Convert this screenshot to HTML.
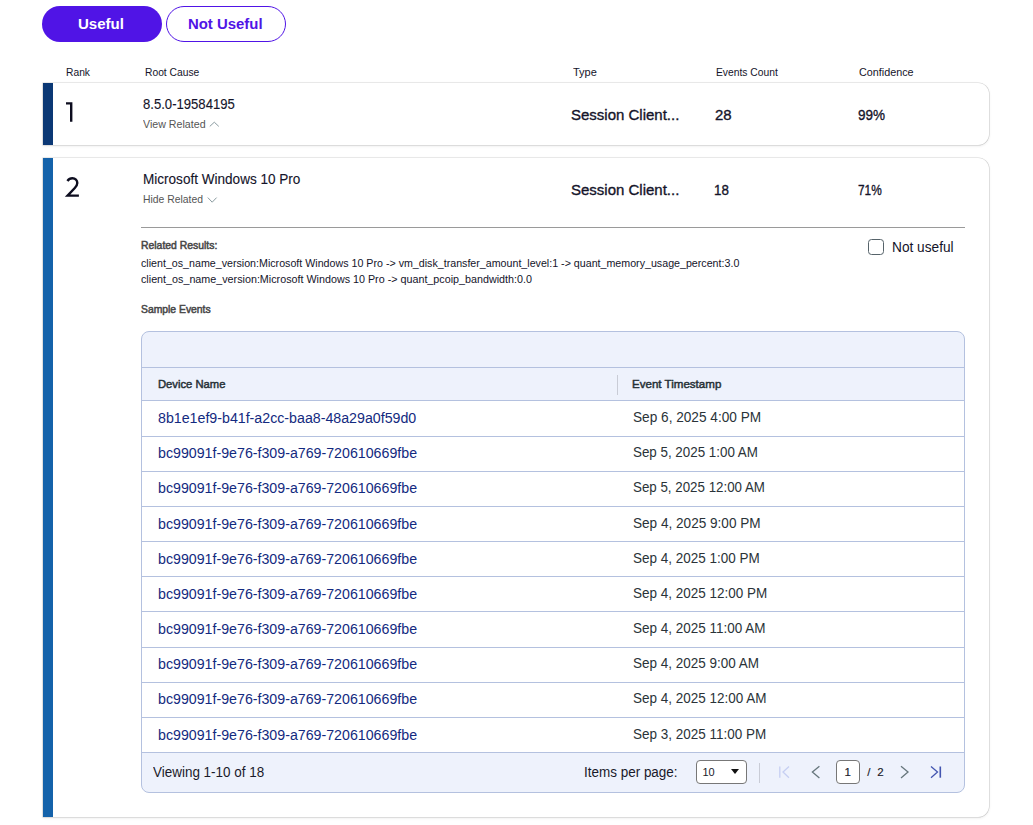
<!DOCTYPE html>
<html><head><meta charset="utf-8">
<style>
*{box-sizing:border-box;margin:0;padding:0}
html,body{width:1033px;height:825px;overflow:hidden;background:#fff;font-family:"Liberation Sans",sans-serif;color:#111}
.t{position:absolute;white-space:nowrap;line-height:1;transform-origin:0 0}
.bm{display:inline-block;width:0;height:0;vertical-align:baseline}
.a{position:absolute}
.xbtn{font-size:14.5px;font-weight:bold;color:#fff;}
.xbtn2{font-size:14.5px;font-weight:bold;color:#5014e6;}
.xhdr{font-size:10.2px;font-weight:normal;color:#14142a;}
.xrank{font-size:28px;font-weight:normal;color:#111;}
.xtitle{font-size:14px;font-weight:normal;color:#14142a;-webkit-text-stroke:0.12px #14142a;}
.xsub{font-size:11px;font-weight:normal;color:#555;}
.xval{font-size:15.5px;font-weight:normal;color:#14142a;-webkit-text-stroke:0.35px #14142a;}
.xrlbl{font-size:10.5px;font-weight:normal;color:#474747;-webkit-text-stroke:0.5px #474747;}
.xrel{font-size:10px;font-weight:normal;color:#14142a;}
.xnu{font-size:14px;font-weight:normal;color:#14142a;}
.xth{font-size:11px;font-weight:normal;color:#263036;-webkit-text-stroke:0.45px #263036;}
.xlink{font-size:14px;font-weight:normal;color:#132a80;}
.xtd{font-size:14px;font-weight:normal;color:#2a3338;}
.xfoot{font-size:14px;font-weight:normal;color:#1a1a2a;}
.xpg{font-size:11.5px;font-weight:normal;color:#1a1a2a;-webkit-text-stroke:0.15px #1a1a2a;}
.xsel{font-size:11px;font-weight:normal;color:#1a1a2a;}
.btn{position:absolute;top:6px;height:36px;width:120px;border-radius:18px}
.b1{left:42px;background:#5014e6}
.b2{left:166px;background:#fff;border:1px solid #5014e6}
.card{position:absolute;left:43px;width:946px;background:#fff;border-left:10px solid #0b3875;border-radius:0 11px 11px 0;box-shadow:0 0 0.5px 0.6px rgba(0,0,0,.16),0 1px 3px rgba(0,0,0,.10)}
.c1{top:83px;height:62px}
.c2{top:158px;height:659px;border-left-color:#1462aa}
.tbl{position:absolute;left:141px;top:331px;width:824px;height:462px;border:1px solid #b4c1df;border-radius:8px;background:#eef2fc;overflow:hidden}
.rows{position:absolute;left:0;top:69px;width:822px;height:352px;background:#fff}
.hl{position:absolute;left:0;width:822px;height:1px;background:#b4c1df}
.cb{position:absolute;left:868px;top:239px;width:16px;height:16px;border:1.4px solid #56636a;border-radius:3.5px;background:#fff}
.box{position:absolute;background:#fff;border:1px solid #777;border-radius:4px}
</style></head><body>
<div class="btn b1"></div>
<div class="btn b2"></div>
<div class="card c1"></div>
<div class="card c2"></div>
<svg class="a" style="left:0;top:0" width="300" height="220" viewBox="0 0 300 220">
<path d="M209.8 126.4 L214.3 122.2 L218.8 126.4" fill="none" stroke="#8a9ba0" stroke-width="1"/>
<path d="M207.8 197.6 L212.2 202.2 L216.6 197.6" fill="none" stroke="#8a9ba0" stroke-width="1"/>
<path d="M66 103.4 H71.2 M71.2 102.2 V121.8" fill="none" stroke="#0d0d1f" stroke-width="2.4"/>
<path d="M67.4 181 C68.8 179 70.5 178.3 72.4 178.3 C75.3 178.3 77.3 180.3 77.3 183 C77.3 185 76.3 186.4 74.8 188 L67.6 195.6 H78.9" fill="none" stroke="#0d0d1f" stroke-width="2.4" stroke-linecap="butt" stroke-linejoin="miter"/>
</svg>
<div class="a" style="left:141px;top:227px;width:824px;height:1px;background:#9a9a9a"></div>
<div class="cb"></div>
<div class="tbl">
  <div class="hl" style="top:35px"></div>
  <div class="a" style="left:475px;top:43px;width:1px;height:20px;background:#c9ccd6"></div>
  <div class="rows"></div>
  <div class="hl" style="top:68.4px"></div>
  <div class="hl" style="top:103.56px"></div>
  <div class="hl" style="top:138.72px"></div>
  <div class="hl" style="top:173.88px"></div>
  <div class="hl" style="top:209.04px"></div>
  <div class="hl" style="top:244.20px"></div>
  <div class="hl" style="top:279.36px"></div>
  <div class="hl" style="top:314.52px"></div>
  <div class="hl" style="top:349.68px"></div>
  <div class="hl" style="top:384.84px"></div>
  <div class="hl" style="top:420.00px"></div>
</div>
<div class="box" style="left:696px;top:760px;width:50.5px;height:23.5px"></div>
<svg class="a" style="left:730px;top:768px" width="10" height="7" viewBox="0 0 10 7"><path d="M1 1 L9 1 L5 6 Z" fill="#111"/></svg>
<div class="a" style="left:759px;top:762.5px;width:1px;height:20px;background:#c9ccd6"></div>
<svg class="a" style="left:776px;top:764px" width="16" height="16" viewBox="0 0 16 16"><path d="M3.8 2.5 V13.7" stroke="#c6cff2" stroke-width="1.3" fill="none"/><path d="M13 2.5 L7 8.1 L13 13.7" stroke="#c6cff2" stroke-width="1.3" fill="none"/></svg>
<svg class="a" style="left:808px;top:764px" width="16" height="16" viewBox="0 0 16 16"><path d="M11.4 2.3 L4.4 8.1 L11.4 13.9" stroke="#66767c" stroke-width="1.3" fill="none"/></svg>
<div class="box" style="left:836px;top:760px;width:23.5px;height:23.5px"></div>
<svg class="a" style="left:897px;top:764px" width="16" height="16" viewBox="0 0 16 16"><path d="M4 2.3 L11 8.1 L4 13.9" stroke="#66767c" stroke-width="1.3" fill="none"/></svg>
<svg class="a" style="left:928px;top:764px" width="16" height="16" viewBox="0 0 16 16"><path d="M3 2.5 L9.5 8.1 L3 13.7" stroke="#4355b0" stroke-width="1.3" fill="none"/><path d="M12.3 2.5 V13.7" stroke="#4355b0" stroke-width="1.6" fill="none"/></svg>
<span id="t0" class="t xbtn" style="left:78.35px;top:17.01px;transform:scaleX(1.0357)">Useful<i class="bm"></i></span>
<span id="t1" class="t xbtn2" style="left:187.97px;top:17.01px;transform:scaleX(1.0282)">Not Useful<i class="bm"></i></span>
<span id="t2" class="t xhdr" style="left:66.00px;top:67.81px;transform:scaleX(1.0087)">Rank<i class="bm"></i></span>
<span id="t3" class="t xhdr" style="left:145.00px;top:67.81px;transform:scaleX(1.0094)">Root Cause<i class="bm"></i></span>
<span id="t4" class="t xhdr" style="left:573.38px;top:67.81px;transform:scaleX(1.0810)">Type<i class="bm"></i></span>
<span id="t5" class="t xhdr" style="left:716.20px;top:67.81px;transform:scaleX(1.0115)">Events Count<i class="bm"></i></span>
<span id="t6" class="t xhdr" style="left:858.97px;top:67.81px;transform:scaleX(1.0588)">Confidence<i class="bm"></i></span>
<span id="t7" class="t xtitle" style="left:143.00px;top:97.01px;transform:scaleX(0.9357)">8.5.0-19584195<i class="bm"></i></span>
<span id="t8" class="t xsub" style="left:143.00px;top:118.80px;transform:scaleX(0.9688)">View Related<i class="bm"></i></span>
<span id="t9" class="t xval" style="left:571.43px;top:106.81px;transform:scaleX(0.9673)">Session Client...<i class="bm"></i></span>
<span id="t10" class="t xval" style="left:714.61px;top:106.81px;transform:scaleX(0.9647)">28<i class="bm"></i></span>
<span id="t11" class="t xval" style="left:858.00px;top:106.81px;transform:scaleX(0.8710)">99%<i class="bm"></i></span>
<span id="t12" class="t xtitle" style="left:143.21px;top:171.90px;transform:scaleX(0.9679)">Microsoft Windows 10 Pro<i class="bm"></i></span>
<span id="t13" class="t xsub" style="left:143.22px;top:193.80px;transform:scaleX(0.9429)">Hide Related<i class="bm"></i></span>
<span id="t14" class="t xval" style="left:571.43px;top:181.81px;transform:scaleX(0.9673)">Session Client...<i class="bm"></i></span>
<span id="t15" class="t xval" style="left:713.76px;top:181.81px;transform:scaleX(0.8625)">18<i class="bm"></i></span>
<span id="t16" class="t xval" style="left:858.00px;top:181.81px;transform:scaleX(0.7645)">71%<i class="bm"></i></span>
<span id="t17" class="t xrlbl" style="left:141.00px;top:240.00px;transform:scaleX(0.9908)">Related Results:<i class="bm"></i></span>
<span id="t18" class="t xrel" style="left:141.00px;top:259.31px;transform:scaleX(1.0668)">client_os_name_version:Microsoft Windows 10 Pro -&gt; vm_disk_transfer_amount_level:1 -&gt; quant_memory_usage_percent:3.0<i class="bm"></i></span>
<span id="t19" class="t xrel" style="left:141.00px;top:275.11px;transform:scaleX(1.0745)">client_os_name_version:Microsoft Windows 10 Pro -&gt; quant_pcoip_bandwidth:0.0<i class="bm"></i></span>
<span id="t20" class="t xnu" style="left:891.83px;top:240.21px;transform:scaleX(0.9770)">Not useful<i class="bm"></i></span>
<span id="t21" class="t xrlbl" style="left:141.00px;top:304.00px;transform:scaleX(0.9859)">Sample Events<i class="bm"></i></span>
<span id="t22" class="t xth" style="left:157.58px;top:379.00px;transform:scaleX(1.0215)">Device Name<i class="bm"></i></span>
<span id="t23" class="t xth" style="left:631.95px;top:379.00px;transform:scaleX(1.0512)">Event Timestamp<i class="bm"></i></span>
<span id="t24" class="t xlink" style="left:157.79px;top:411.10px;transform:scaleX(1.0146)">8b1e1ef9-b41f-a2cc-baa8-48a29a0f59d0<i class="bm"></i></span>
<span id="t25" class="t xtd" style="left:632.82px;top:410.10px;transform:scaleX(0.9738)">Sep 6, 2025 4:00 PM<i class="bm"></i></span>
<span id="t26" class="t xlink" style="left:157.79px;top:446.26px;transform:scaleX(1.0146)">bc99091f-9e76-f309-a769-720610669fbe<i class="bm"></i></span>
<span id="t27" class="t xtd" style="left:632.83px;top:445.26px;transform:scaleX(0.9550)">Sep 5, 2025 1:00 AM<i class="bm"></i></span>
<span id="t28" class="t xlink" style="left:157.79px;top:481.43px;transform:scaleX(1.0146)">bc99091f-9e76-f309-a769-720610669fbe<i class="bm"></i></span>
<span id="t29" class="t xtd" style="left:632.83px;top:480.43px;transform:scaleX(0.9526)">Sep 5, 2025 12:00 AM<i class="bm"></i></span>
<span id="t30" class="t xlink" style="left:157.79px;top:516.59px;transform:scaleX(1.0146)">bc99091f-9e76-f309-a769-720610669fbe<i class="bm"></i></span>
<span id="t31" class="t xtd" style="left:632.82px;top:515.59px;transform:scaleX(0.9700)">Sep 4, 2025 9:00 PM<i class="bm"></i></span>
<span id="t32" class="t xlink" style="left:157.79px;top:551.75px;transform:scaleX(1.0146)">bc99091f-9e76-f309-a769-720610669fbe<i class="bm"></i></span>
<span id="t33" class="t xtd" style="left:632.82px;top:550.75px;transform:scaleX(0.9629)">Sep 4, 2025 1:00 PM<i class="bm"></i></span>
<span id="t34" class="t xlink" style="left:157.79px;top:586.90px;transform:scaleX(1.0146)">bc99091f-9e76-f309-a769-720610669fbe<i class="bm"></i></span>
<span id="t35" class="t xtd" style="left:632.82px;top:585.90px;transform:scaleX(0.9629)">Sep 4, 2025 12:00 PM<i class="bm"></i></span>
<span id="t36" class="t xlink" style="left:157.79px;top:622.07px;transform:scaleX(1.0146)">bc99091f-9e76-f309-a769-720610669fbe<i class="bm"></i></span>
<span id="t37" class="t xtd" style="left:632.82px;top:621.07px;transform:scaleX(0.9629)">Sep 4, 2025 11:00 AM<i class="bm"></i></span>
<span id="t38" class="t xlink" style="left:157.79px;top:657.23px;transform:scaleX(1.0146)">bc99091f-9e76-f309-a769-720610669fbe<i class="bm"></i></span>
<span id="t39" class="t xtd" style="left:632.82px;top:656.23px;transform:scaleX(0.9629)">Sep 4, 2025 9:00 AM<i class="bm"></i></span>
<span id="t40" class="t xlink" style="left:157.79px;top:692.39px;transform:scaleX(1.0146)">bc99091f-9e76-f309-a769-720610669fbe<i class="bm"></i></span>
<span id="t41" class="t xtd" style="left:632.82px;top:691.39px;transform:scaleX(0.9629)">Sep 4, 2025 12:00 AM<i class="bm"></i></span>
<span id="t42" class="t xlink" style="left:157.79px;top:727.54px;transform:scaleX(1.0146)">bc99091f-9e76-f309-a769-720610669fbe<i class="bm"></i></span>
<span id="t43" class="t xtd" style="left:632.82px;top:726.54px;transform:scaleX(0.9629)">Sep 3, 2025 11:00 PM<i class="bm"></i></span>
<span id="t44" class="t xfoot" style="left:153.02px;top:765.10px;transform:scaleX(0.9609)">Viewing 1-10 of 18<i class="bm"></i></span>
<span id="t45" class="t xfoot" style="left:584.25px;top:765.21px;transform:scaleX(0.9621)">Items per page:<i class="bm"></i></span>
<span id="t46" class="t xsel" style="left:702.40px;top:766.80px;transform:scaleX(1.0000)">10<i class="bm"></i></span>
<span id="t47" class="t xpg" style="left:844.60px;top:767.00px;transform:scaleX(1.0000)">1<i class="bm"></i></span>
<span id="t48" class="t xpg" style="left:867.20px;top:767.00px;transform:scaleX(1.0000)">/<i class="bm"></i></span>
<span id="t49" class="t xpg" style="left:877.20px;top:767.00px;transform:scaleX(1.0000)">2<i class="bm"></i></span>
</body></html>
